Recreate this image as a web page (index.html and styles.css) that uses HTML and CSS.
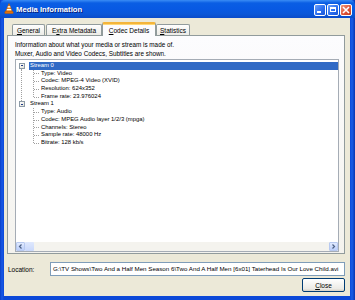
FILE: index.html
```html
<!DOCTYPE html>
<html lang="en">
<head>
    <meta charset="utf-8" />
    <title>Media Information</title>
    <link rel="stylesheet" href="styles.css">
</head>
<body>
    <div class="window">
        <div class="titlebar">
            <svg class="app-icon" width="10" height="11" viewBox="0 0 10 11">
                <path d="M5 0.5 L8.4 9 L1.6 9 Z" fill="#f28a17" stroke="#b85a07" stroke-width="0.6"/>
                <path d="M3.9 3.3 L6.1 3.3 L6.6 4.6 L3.4 4.6 Z" fill="#fff"/>
                <path d="M3 5.9 L7 5.9 L7.5 7.2 L2.5 7.2 Z" fill="#fff"/>
                <rect x="0.8" y="8.6" width="8.4" height="1.8" rx="0.5" fill="#e8760e" stroke="#b85a07" stroke-width="0.5"/>
            </svg>
            <span class="title">Media Information</span>
            <div class="caption-buttons">
                <span class="cap-btn"><span class="glyph-min"></span></span>
                <span class="cap-btn"><span class="glyph-max"></span></span>
                <span class="cap-btn close">
                    <svg width="8" height="8" viewBox="0 0 8 8"><path d="M1 1 L7 7 M7 1 L1 7" stroke="#fff" stroke-width="1.6"/></svg>
                </span>
            </div>
        </div>

        <div class="client">
            <div class="tabs">
                <div class="tab t-general"><u>G</u>eneral</div>
                <div class="tab t-extra">E<u>x</u>tra Metadata</div>
                <div class="tab t-codec active"><u>C</u>odec Details</div>
                <div class="tab t-stats"><u>S</u>tatistics</div>
            </div>

            <div class="panel">
                <p class="intro">Information about what your media or stream is made of.<br>Muxer, Audio and Video Codecs, Subtitles are shown.</p>

                <div class="tree">
                    <div class="tree-view">
                        <div class="node first">
                            <div class="row"><span class="toggle"></span><span class="label selected">Stream 0</span></div>
                            <div class="children">
                                <div class="leaf">Type: Video</div>
                                <div class="leaf">Codec: MPEG-4 Video (XVID)</div>
                                <div class="leaf">Resolution: 624x352</div>
                                <div class="leaf">Frame rate: 23.976024</div>
                            </div>
                        </div>
                        <div class="node">
                            <div class="row"><span class="toggle"></span><span class="label">Stream 1</span></div>
                            <div class="children">
                                <div class="leaf">Type: Audio</div>
                                <div class="leaf">Codec: MPEG Audio layer 1/2/3 (mpga)</div>
                                <div class="leaf">Channels: Stereo</div>
                                <div class="leaf">Sample rate: 48000 Hz</div>
                                <div class="leaf">Bitrate: 128 kb/s</div>
                            </div>
                        </div>
                    </div>
                    <div class="hscroll">
                        <span class="sb-btn">
                            <svg width="5" height="5" viewBox="0 0 5 5"><path d="M3.5 0.5 L1.5 2.5 L3.5 4.5" fill="none" stroke="#4d6185" stroke-width="1.2"/></svg>
                        </span>
                        <span class="sb-thumb"></span>
                        <span class="sb-track"></span>
                        <span class="sb-btn">
                            <svg width="5" height="5" viewBox="0 0 5 5"><path d="M1.5 0.5 L3.5 2.5 L1.5 4.5" fill="none" stroke="#4d6185" stroke-width="1.2"/></svg>
                        </span>
                    </div>
                </div>
            </div>

            <div class="location-row">
                <span class="loc-label">Location:</span>
                <div class="loc-field">G:\TV Shows\Two And a Half Men Season 6\Two And A Half Men [6x01] Taterhead Is Our Love Child.avi</div>
            </div>

            <div class="actions">
                <button class="btn"><u>C</u>lose</button>
            </div>
        </div>
    </div>
</body>
</html>
```

FILE: styles.css
```css
body {
    margin: 0;
    width: 355px;
    height: 300px;
    overflow: hidden;
    font-family: "Liberation Sans", Arial, sans-serif;
}

.window {
    width: 355px;
    height: 300px;
    box-sizing: border-box;
    padding: 0 5px 4px 4px;
    display: flex;
    flex-direction: column;
    background: linear-gradient(to right, #0a3fc6 0, #1758e6 2px, #0b48d8 4px, #0b48d8 350px, #1a5de8 352px, #0a35b0 355px);
}

/* title bar */
.titlebar {
    height: 18px;
    margin: 0 -5px 0 -4px;
    padding: 0 3px 0 4px;
    display: flex;
    align-items: center;
    background: linear-gradient(to bottom, #3a8cf5 0, #0a5ee4 3px, #0859e3 9px, #0a57d8 14px, #0a4bc9 18px);
    border-radius: 5px 5px 0 0;
}

.app-icon {
    margin-right: 2px;
    margin-top: -1px;
}

.title {
    color: #fff;
    font-weight: bold;
    font-size: 7.7px;
    text-shadow: 1px 1px 0 #0a1e78;
}

.caption-buttons {
    margin-left: auto;
    display: flex;
    gap: 1px;
    margin-top: 1px;
}

.cap-btn {
    width: 12px;
    height: 12px;
    box-sizing: border-box;
    border: 1px solid #fff;
    border-radius: 2px;
    background: linear-gradient(135deg, #6fa2fb 0, #2b6ff0 55%, #1a55d6 100%);
    display: flex;
    align-items: center;
    justify-content: center;
}

.cap-btn.close {
    background: linear-gradient(135deg, #f09a7c 0, #e0553a 55%, #c23b1e 100%);
}

.glyph-min {
    width: 4px;
    height: 2px;
    background: #fff;
    margin: 5px 3px 0 0;
}

.glyph-max {
    width: 6px;
    height: 5px;
    box-sizing: border-box;
    border: 1px solid #fff;
    border-top-width: 2px;
}

/* client area */
.client {
    flex: 1;
    background: #ece9d8;
    padding: 4px 0 0 3px;
    display: flex;
    flex-direction: column;
}

.tabs {
    display: flex;
    align-items: flex-end;
    height: 13px;
    margin-left: 5px;
    position: relative;
    z-index: 1;
}

.tab {
    height: 11px;
    box-sizing: border-box;
    border: 1px solid #919b9c;
    border-bottom: none;
    border-radius: 2px 2px 0 0;
    background: linear-gradient(to bottom, #fefefe, #ecebe6);
    font-size: 6.5px;
    color: #000;
    display: flex;
    align-items: center;
    justify-content: center;
    margin-right: 1px;
}

.tab u {
    text-decoration-thickness: 0.5px;
    text-underline-offset: 1px;
}

.t-general { width: 33px; }
.t-extra { width: 56px; }
.t-codec { width: 54px; }
.t-stats { width: 34px; }

.tab.active {
    height: 14px;
    margin: 0 0 -1px -1px;
    background: #fcfcfe;
    border-top: 2px solid #f4b53b;
    box-shadow: inset 0 1px 0 #ffd775;
    padding-top: 1px;
}

.panel {
    height: 219px;
    box-sizing: border-box;
    border: 1px solid #919b9c;
    background: linear-gradient(to bottom, #fcfcfe, #f4f3ee);
    margin-right: 5px;
    display: flex;
    flex-direction: column;
}

.intro {
    margin: 4px 0 0 7px;
    font-size: 6.35px;
    line-height: 9px;
    color: #000;
}

.tree {
    margin: 1px 5px 0 7px;
    height: 193px;
    box-sizing: border-box;
    border: 1px solid #a5acb5;
    background: #fff;
    display: flex;
    flex-direction: column;
}

.tree-view {
    flex: 1;
    padding-top: 2px;
    font-size: 5.9px;
    color: #000;
}

.node {
    position: relative;
}

.node.first::before {
    content: "";
    position: absolute;
    left: 5px;
    top: 7px;
    height: 38px;
    border-left: 1px dotted #a0a0a0;
}

.row {
    height: 7.7px;
    display: flex;
    align-items: center;
    padding-left: 3px;
}

.toggle {
    width: 6px;
    height: 6px;
    box-sizing: border-box;
    border: 1px solid #8c9aa6;
    background: linear-gradient(to bottom right, #fff, #e3e1d6);
    display: flex;
    align-items: center;
    justify-content: center;
    margin-right: 4px;
}

.toggle::after {
    content: "";
    width: 2px;
    height: 1px;
    background: #1e3a8a;
}

.label {
    line-height: 7.7px;
    padding-left: 1px;
    flex: 1;
}

.label.selected {
    background: #316ac5;
    color: #fff;
}

.children {
    position: relative;
}

.children::before {
    content: "";
    position: absolute;
    left: 17px;
    top: 0;
    bottom: 3.8px;
    border-left: 1px dotted #a0a0a0;
}

.leaf {
    position: relative;
    height: 7.7px;
    line-height: 7.7px;
    padding-left: 25px;
    white-space: nowrap;
}

.leaf::before {
    content: "";
    position: absolute;
    left: 18px;
    top: 3.8px;
    width: 5px;
    border-top: 1px dotted #a0a0a0;
}

/* horizontal scrollbar */
.hscroll {
    height: 9px;
    display: flex;
    background: #f4f3ee;
}

.sb-btn {
    width: 9px;
    height: 9px;
    box-sizing: border-box;
    border: 1px solid #b7c9f0;
    border-radius: 1px;
    background: linear-gradient(to bottom, #e1eafe, #bccffa);
    display: flex;
    align-items: center;
    justify-content: center;
}

.sb-thumb {
    width: 9px;
    background: linear-gradient(to bottom, #dfe8fd, #c9d8fb);
    border-radius: 1px;
}

.sb-track {
    flex: 1;
}

/* location */
.location-row {
    display: flex;
    align-items: center;
    margin-top: 8px;
    padding-left: 1px;
}

.loc-label {
    width: 42px;
    font-size: 6.5px;
    color: #000;
}

.loc-field {
    width: 295px;
    height: 14px;
    box-sizing: border-box;
    border: 1px solid #7f9db9;
    background: #fff;
    font-size: 6.2px;
    line-height: 12px;
    padding-left: 2px;
    white-space: nowrap;
    overflow: hidden;
}

.actions {
    display: flex;
    justify-content: flex-end;
    margin-top: 2px;
    padding-right: 5px;
}

.btn {
    width: 43px;
    height: 14px;
    box-sizing: border-box;
    border: 1px solid #003c74;
    border-radius: 2px;
    background: linear-gradient(to bottom, #ffffff, #ecebe6 80%, #d6d0c5);
    font-family: "Liberation Sans", Arial, sans-serif;
    font-size: 6.5px;
    color: #000;
    padding: 0;
}
```
